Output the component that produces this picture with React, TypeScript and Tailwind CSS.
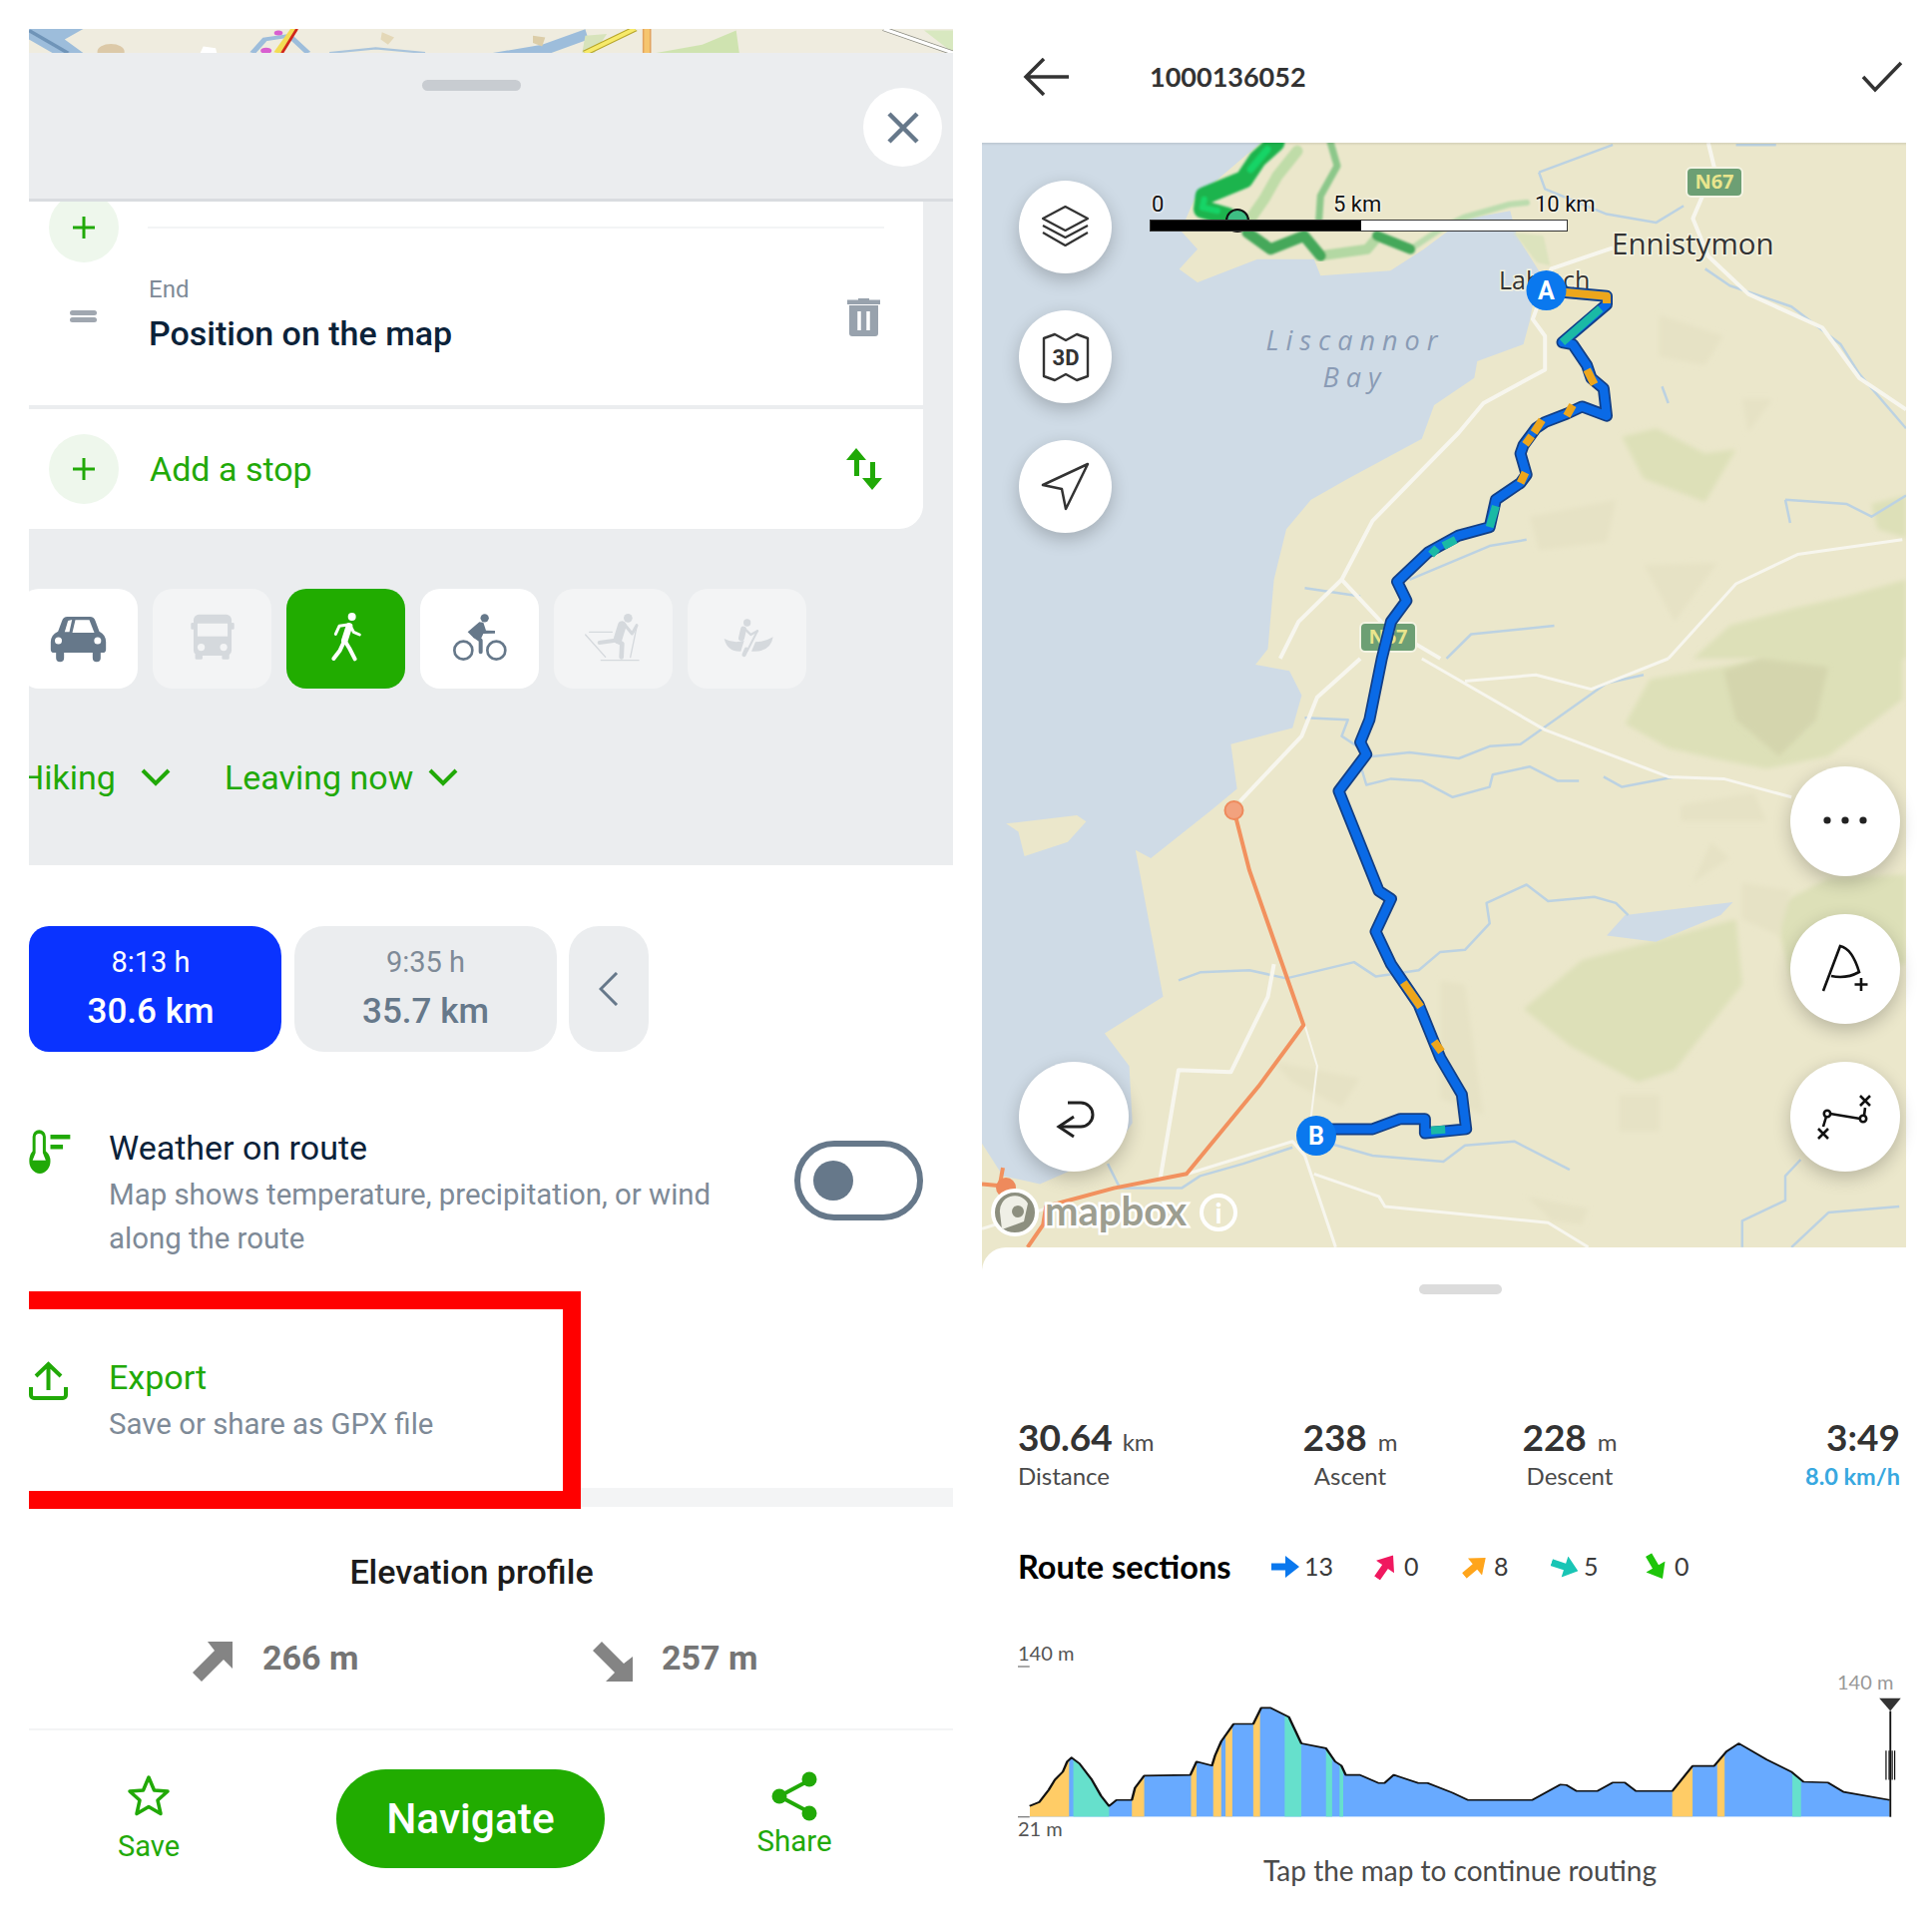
import React from "react";

const conv = (s: string, ox: number, kx: number, oy: number, ky: number) =>
  s
    .trim()
    .split(/\s+/)
    .map((p) => {
      const [x, y] = p.split(",").map(Number);
      return `${(ox + x / kx).toFixed(1)},${(oy + y / ky).toFixed(1)}`;
    })
    .join(" ");
const z4 = (s: string) => conv(s, 968, 1.62, 0, 2.376);
const z5 = (s: string) => conv(s, 968, 1.62, 660, 2.45);
const z3 = (s: string) => conv(s, 1150, 3, 143, 3);

const GREEN = "#21a907";

function TopStrip() {
  return (
    <svg className="block w-[926px] h-[24px] bg-[#efecdf]" viewBox="47 81 1500 67" preserveAspectRatio="none">
      <polygon points="47,81 135,81 105,110 135,148 85,148 47,110" fill="#9dbddb" />
      <polyline points="47,85 110,148" stroke="#6f94b8" strokeWidth="8" fill="none" />
      <circle cx="180" cy="145" r="22" fill="#dcc9a8" />
      <polygon points="325,148 330,130 350,135 352,148" fill="#fff" />
      <polyline points="410,148 430,110 470,100 500,148" stroke="#9dbddb" strokeWidth="10" fill="none" />
      <polyline points="478,81 450,148" stroke="#f3dc55" strokeWidth="12" fill="none" />
      <polyline points="482,81 458,148" stroke="#d0261c" strokeWidth="5" fill="none" />
      <circle cx="432" cy="142" r="9" fill="#d85fd0" />
      <circle cx="452" cy="92" r="7" fill="#d85fd0" />
      <polygon points="620,90 640,105 630,125 618,110" fill="#e4d8b8" />
      <polyline points="535,148 610,135 690,148" stroke="#a9c4dc" strokeWidth="6" fill="none" />
      <polygon points="800,148 880,125 950,82 955,110 895,148" fill="#9dbddb" />
      <polygon points="865,100 885,105 880,130 865,120" fill="#dccda8" />
      <polygon points="950,100 985,95 965,148 945,148" fill="#d7e3bb" />
      <polyline points="1030,81 950,148" stroke="#b6a52a" strokeWidth="14" fill="none" />
      <polyline points="1030,81 950,148" stroke="#f7ea6a" strokeWidth="9" fill="none" />
      <polyline points="1050,81 1050,148" stroke="#e2a25e" strokeWidth="14" fill="none" />
      <polyline points="1050,81 1050,148" stroke="#f6c56e" strokeWidth="9" fill="none" />
      <polygon points="1065,148 1140,125 1195,85 1200,148" fill="#cfe3b0" />
      <polygon points="1500,85 1547,85 1547,148" fill="#d8e8c0" />
      <polyline points="1435,81 1547,148" stroke="#8a8a80" strokeWidth="12" fill="none" />
      <polyline points="1435,81 1547,148" stroke="#fff" strokeWidth="8" fill="none" />
    </svg>
  );
}

function PlusCircle() {
  return (
    <div className="w-[70px] h-[70px] rounded-full bg-[#eef7ec] flex items-center justify-center shrink-0">
      <svg width="24" height="24" viewBox="0 0 24 24">
        <path d="M12 1V23M1 12H23" stroke={GREEN} strokeWidth="3" />
      </svg>
    </div>
  );
}

function ModeButton({ bg, children }: { bg: string; children: React.ReactNode }) {
  return (
    <div className={`w-[119px] h-[100px] rounded-[20px] flex items-center justify-center shrink-0 ${bg}`}>{children}</div>
  );
}

function CarIcon() {
  return (
    <svg width="61" height="60" viewBox="58 30 182 180">
      <path
        d="M66 130Q66 108 88 98L100 66Q104 54 116 54H184Q196 54 200 66L212 98Q232 108 232 130V152Q232 162 222 162H216V178A12 12 0 0 1 192 178V162H106V178A12 12 0 0 1 82 178V162H76Q66 162 66 152Z"
        fill="#66788a"
      />
      <polygon points="108,100 118,66 130,63 122,100" fill="#fff" />
      <polygon points="131,102 140,64 182,64 197,102" fill="#fff" />
      <circle cx="89" cy="126" r="10.5" fill="#fff" />
      <circle cx="207" cy="126" r="10.5" fill="#fff" />
    </svg>
  );
}

function BusIcon() {
  return (
    <svg width="48" height="60" viewBox="480 30 145 180">
      <rect x="495" y="47" width="115" height="124" rx="16" fill="#d5d9dd" />
      <rect x="500" y="165" width="22" height="18" rx="4" fill="#d5d9dd" />
      <rect x="581" y="165" width="22" height="18" rx="4" fill="#d5d9dd" />
      <rect x="487" y="72" width="10" height="20" rx="4" fill="#d5d9dd" />
      <rect x="608" y="72" width="10" height="20" rx="4" fill="#d5d9dd" />
      <rect x="507" y="74" width="91" height="39" fill="#f3f4f5" />
      <circle cx="518" cy="146" r="11" fill="#f3f4f5" />
      <circle cx="586" cy="146" r="11" fill="#f3f4f5" />
    </svg>
  );
}

function WalkIcon() {
  return (
    <svg width="40" height="60" viewBox="895 30 120 180" fill="none" stroke="#fff" strokeLinecap="round" strokeLinejoin="round">
      <circle cx="972" cy="54" r="12" fill="#fff" stroke="none" />
      <path d="M964 82L950 125" strokeWidth="20" />
      <path d="M960 78L934 82L923 106M968 82L977 100L995 108" strokeWidth="9" />
      <path d="M950 125L936 155L917 180M950 125L965 150L981 181" strokeWidth="12" />
    </svg>
  );
}

function BikeIcon() {
  return (
    <svg width="60" height="60" viewBox="95 30 180 180">
      <circle cx="199" cy="58" r="12.5" fill="#66788a" />
      <polygon points="148,100 183,70 195,71 203,95 230,96 230,104 195,105 188,120 166,118" fill="#66788a" />
      <path d="M170 113L187 125V160" fill="none" stroke="#66788a" strokeWidth="12" strokeLinejoin="round" strokeLinecap="round" />
      <circle cx="135" cy="155" r="27" fill="none" stroke="#66788a" strokeWidth="8" />
      <circle cx="234" cy="155" r="27" fill="none" stroke="#66788a" strokeWidth="8" />
    </svg>
  );
}

function SkiIcon() {
  return (
    <svg width="60" height="60" viewBox="495 30 180 180" fill="none" stroke="#d5d9dd" strokeLinecap="round" strokeLinejoin="round">
      <circle cx="628" cy="58" r="13" fill="#d5d9dd" stroke="none" />
      <path d="M610 80L597 122" strokeWidth="26" />
      <path d="M618 78L640 105L654 80" strokeWidth="9" />
      <path d="M596 128L610 135L608 175" strokeWidth="14" />
      <path d="M590 125L542 132" strokeWidth="12" />
      <path d="M655 80L635 176M580 100H512M500 108L560 175M547 185H660" strokeWidth="4" />
    </svg>
  );
}

function CanoeIcon() {
  return (
    <svg width="60" height="60" viewBox="898 30 180 180" fill="none" stroke="#d5d9dd" strokeLinecap="round" strokeLinejoin="round">
      <circle cx="987" cy="72" r="11" fill="#d5d9dd" stroke="none" />
      <path d="M976 92L970 118" strokeWidth="18" />
      <path d="M984 94L998 108L1018 97" strokeWidth="7" />
      <path d="M1018 97L988 155" strokeWidth="6" />
      <path d="M985 152L978 168" strokeWidth="13" />
      <path d="M918 120Q945 135 978 126L968 158Q928 160 918 120Z" fill="#d5d9dd" stroke="none" />
      <path d="M1065 115Q1040 130 1012 130L1000 158Q1058 162 1065 115Z" fill="#d5d9dd" stroke="none" />
    </svg>
  );
}

function Chevron() {
  return (
    <svg width="30" height="18" viewBox="0 0 30 18">
      <path d="M2 2L15 15L28 2" stroke={GREEN} strokeWidth="4" fill="none" />
    </svg>
  );
}

function FatArrow({ className }: { className?: string }) {
  return (
    <svg width="40" height="40" viewBox="0 0 40 40" className={className}>
      <polygon points="15,0 40,0 40,27 31,18 9,40 0,31 22,9" fill="#848484" />
    </svg>
  );
}

function Legend({ color, rot, n, w }: { color: string; rot: string; n: string; w: string }) {
  return (
    <div className={`flex items-center gap-[5px] ${w}`}>
      <svg width="28" height="22" viewBox="0 0 28 22" className={rot}>
        <polygon points="0,7.5 14,7.5 14,0 28,11 14,22 14,14.5 0,14.5" fill={color} />
      </svg>
      <span className="text-[25px] text-[#3a3a3a]">{n}</span>
    </div>
  );
}

function MapView() {
  const land = "#ebe7cb";
  const route =
    z4("942,692 1040,705 1040,725 968,815 985,820 1008,870 1015,900 1035,925 1040,990 1000,968 975,985 940,1005 925,1020 905,1060 900,1080 910,1130 900,1150 860,1190 850,1255 800,1275 750,1315 700,1385 715,1430 690,1480 675,1568") +
    " " +
    z5("655,150 640,205 650,235 605,325 670,570 690,590 665,670 690,750 735,850 770,980 805,1070 812,1155 745,1165 745,1130 705,1130 660,1155 565,1155");
  return (
    <svg className="absolute inset-0 w-[926px] h-[1137px]" viewBox="984 143 926 1137">
      <defs>
        <filter id="soft" x="-5%" y="-5%" width="110%" height="110%">
          <feGaussianBlur stdDeviation="2.5" />
        </filter>
        <filter id="soft2" x="-5%" y="-5%" width="110%" height="110%">
          <feGaussianBlur stdDeviation="1.3" />
        </filter>
      </defs>
      <rect x="984" y="143" width="926" height="1137" fill={land} />
      {/* terrain */}
      <g fill="#dde0b8" filter="url(#soft)">
        <polygon points={z5("1070,160 1110,50 1300,0 1520,0 1520,100 1400,240 1300,270 1230,250 1140,220")} />
        <polygon points={z4("1180,1568 1240,1490 1340,1450 1430,1420 1526,1380 1526,1568")} />
        <polygon points={z5("905,860 1000,740 1250,640 1260,800 1150,1010 1090,1040 980,950")} />
        <polygon points={z4("1065,1040 1120,1020 1200,1080 1250,1070 1200,1195 1100,1140")} />
        <polygon points={z5("1310,610 1400,540 1526,530 1526,750 1340,790")} />
        <polygon points={z4("1470,1200 1526,1180 1526,1280 1480,1260")} />
      </g>
      <g fill="#d4d5ad" filter="url(#soft)">
        <polygon points={z5("1230,30 1290,0 1400,20 1380,150 1320,240 1250,150")} />
      </g>
      <g fill="#e6e2c5" filter="url(#soft)">
        <polygon points={z4("1125,750 1230,800 1200,870 1125,850")} />
        <polygon points={z4("915,1230 1055,1190 1040,1290 930,1310")} />
        <polygon points={z4("1100,1345 1220,1340 1150,1480")} />
        <polygon points={z4("1260,950 1310,950 1270,1030")} />
        <polygon points={z5("1160,360 1280,330 1300,400 1160,400")} />
        <polygon points={z5("770,790 810,800 840,1120 770,1080")} />
        <polygon points={z5("1060,1070 1125,1070 1125,1160 1060,1160")} />
        <polygon points={z5("500,990 640,1030 610,1100 530,1040")} />
        <polygon points={z5("1210,450 1240,490 1180,550")} />
        <polygon points={z5("910,1320 1010,1350 1000,1390 950,1380")} />
        <polygon points={z5("1260,550 1340,570 1320,680 1260,640")} />
      </g>
      {/* water */}
      <polygon
        fill="#cfdbe6"
        points={
          "984,143 " +
          z3("340,0 140,170 100,265 150,320 95,380 150,420 330,350 500,350 520,400 730,385 830,320 950,230 1090,205 1110,280") +
          " " +
          z4("930,645 915,765 905,820 830,860 825,900 760,965 740,1045 620,1140 560,1190 520,1260 500,1380 490,1545") +
          " " +
          z5("470,15 525,30 545,90 530,170 430,210 440,320 400,370 300,490 275,470 320,830 225,920 265,1000 270,1140 240,1210 120,1290 60,1270 26,1190") +
          " 984,1146"
        }
      />
      <polygon fill={land} points={z5("65,405 180,385 195,400 165,450 95,485 85,425")} />
      <polygon fill="#cfdbe6" points={z5("1040,680 1070,630 1150,615 1245,598 1225,630 1120,695")} />
      {/* trails top */}
      <g fill="none" strokeLinejoin="round" strokeLinecap="round" filter="url(#soft2)">
        <polyline points={z3("450,25 390,100 350,170 310,228")} stroke="#bfdca8" strokeWidth="11" />
        <polyline points={z3("550,0 570,70 520,160 515,230")} stroke="#8cc78a" strokeWidth="7" />
        <polyline points={z3("520,340 660,320 690,285")} stroke="#b3d8a3" strokeWidth="10" />
        <polyline points={z3("790,320 880,260 950,225 1090,185 1140,180")} stroke="#bcdcae" strokeWidth="6" />
        <polyline points={z3("300,270 370,320 470,280 520,340")} stroke="#45a85a" strokeWidth="11" />
        <polyline points={z3("690,280 790,320")} stroke="#45a85a" strokeWidth="10" />
        <polyline points={z3("385,0 330,50 290,110 170,160 165,200 240,222")} stroke="#1fb44e" strokeWidth="18" />
        <polyline points={z3("360,20 310,80")} stroke="#14d466" strokeWidth="7" />
        <polyline points={z3("170,170 165,195 210,205")} stroke="#14d466" strokeWidth="6" />
      </g>
      <polygon fill="#dce3bd" points={z3("1100,270 1190,280 1210,370 1170,360")} filter="url(#soft2)" />
      {/* rivers */}
      <g fill="none" stroke="#bcd2e2" strokeWidth="2.5" strokeLinejoin="round">
        <polyline points={z5("345,790 380,770 460,765 520,785 630,745 665,780 735,765 770,720 810,715 850,650 845,600 910,555 945,595 1020,585 1055,600 1075,630")} />
        <polyline points={z5("550,145 620,150 610,190 660,240 720,230 800,245 850,215 900,210 1040,60 1100,40")} />
        <polyline points={z5("640,260 650,310 690,295 740,300 790,340 850,315 855,285 915,265 960,300 995,300")} />
        <polyline points={z5("1035,290 1065,315 1150,290")} />
        <polyline points={z5("590,1190 660,1220 775,1235 810,1195 890,1185 980,1255")} />
        <polyline points={z5("230,1240 250,1300 350,1300 380,1270 450,1240 530,1200")} />
        <polyline points={z5("1260,1445 1260,1380 1330,1330 1330,1270 1355,1230")} />
        <polyline points={z5("1340,1445 1400,1360 1515,1345")} />
        <polyline points={z4("930,410 1050,345")} />
        <polyline points={z4("930,410 940,450 1040,510 1120,530 1165,490")} />
        <polyline points={z4("1250,345 1315,345")} />
        <polyline points={z4("1200,640 1240,680 1340,730 1420,820 1450,890 1526,1020")} />
        <polyline points={z4("1130,920 1140,960")} />
        <polyline points={z4("1330,1190 1338,1245")} />
        <polyline points={z4("1330,1190 1430,1200 1470,1230 1526,1180")} />
        <polyline points={z4("720,1380 850,1300 910,1285")} />
        <polyline points={z4("780,1568 820,1510 955,1490")} />
        <polyline points={z4("550,1400 640,1420")} />
      </g>
      {/* roads */}
      <g fill="none" stroke="#f7f6ee" strokeWidth="4" strokeLinejoin="round">
        <polyline points={z4("1050,590 950,640 920,760 940,800 940,880 840,960 800,1030 660,1240 610,1380 680,1490 770,1568")} />
        <polyline points={z4("1205,340 1215,400 1180,520 1205,610 1270,700 1390,780 1450,900 1526,975")} />
        <polyline points={z4("610,1380 540,1480 510,1568")} />
        <polyline points={z5("640,0 570,95 545,190 445,350")} />
        <polyline points={z5("500,750 490,830 430,1015 345,1010 315,1280")} />
        <polyline points={z5("740,0 940,175 1140,290 1230,295 1340,340")} strokeWidth="3" />
        <polyline points={z4("1140,1568 1250,1390 1350,1320 1520,1285")} strokeWidth="3" />
        <polyline points={z5("810,55 925,40 1015,75 1140,0")} strokeWidth="3" />
        <polyline points={z5("565,1265 670,1320 680,1345 945,1385 1010,1445")} strokeWidth="3" />
        <polyline points={z5("360,1265 530,1185 550,1220 600,1445")} strokeWidth="3" />
        <polyline points={z5("550,900 570,1000 555,1190")} strokeWidth="2" />
        <polyline points={z5("26,1400 130,1350")} strokeWidth="3" />
      </g>
      {/* orange route */}
      <g fill="none" stroke="#f2915e" strokeWidth="4" strokeLinejoin="round">
        <polyline points={z5("435,372 460,520 548,900 475,1050 358,1265 240,1300 130,1345 125,1390 100,1445")} />
        <polyline points={z5("26,1290 60,1295")} />
        <polyline points={z5("60,1250 55,1290")} />
      </g>
      <circle cx="1236.5" cy="812" r="9" fill="#f2a27e" stroke="#ee8a5c" strokeWidth="2" />
      <circle cx="1008" cy="1190" r="10" fill="#ee8a5c" />
      {/* badges */}
      <g style={{ fontFamily: '"Open Sans", sans-serif' }}>
        <rect x="1690" y="168" width="56" height="29" rx="5" fill="#6d9f74" stroke="#f4f4e4" strokeWidth="2" />
        <text x="1718" y="189" textAnchor="middle" fontSize="20" fontWeight="700" fill="#e9e58d">N67</text>
        <rect x="1363" y="624" width="56" height="29" rx="5" fill="#6d9f74" stroke="#f4f4e4" strokeWidth="2" />
        <text x="1391" y="645" textAnchor="middle" fontSize="20" fontWeight="700" fill="#e9e58d">N67</text>
      </g>
      {/* labels */}
      <g style={{ fontFamily: '"Open Sans", sans-serif' }}>
        <text x="1615" y="255" fontSize="29.5" fill="#333" stroke="#f4f2df" strokeWidth="3" style={{ paintOrder: "stroke" }}>Ennistymon</text>
        <text x="1502" y="290" fontSize="25" fill="#333" stroke="#f4f2df" strokeWidth="3" style={{ paintOrder: "stroke" }}>Lahinch</text>
        <text x="1358" y="351" textAnchor="middle" fontSize="27" fontStyle="italic" fill="#8a9bb5" letterSpacing="7">Liscannor</text>
        <text x="1358" y="388" textAnchor="middle" fontSize="27" fontStyle="italic" fill="#8a9bb5" letterSpacing="7">Bay</text>
      </g>
      {/* blue route */}
      <g fill="none" strokeLinejoin="round" strokeLinecap="round">
        <polyline points={route} stroke="#123f86" strokeWidth="12" />
        <polyline points={route} stroke="#0a6ae6" strokeWidth="8.5" />
      </g>
      <g fill="none" strokeLinejoin="round" strokeWidth="8">
        <polyline points={z4("942,692 1040,705 1040,722")} stroke="#eda61c" />
        <polyline points={z4("1030,735 968,815")} stroke="#1ab9a5" />
        <polyline points={z4("1008,880 1020,915")} stroke="#eda61c" />
        <polyline points={z4("985,965 975,990")} stroke="#eda61c" />
        <polyline points={z4("935,1000 922,1030")} stroke="#eda61c" />
        <polyline points={z4("918,1038 908,1058")} stroke="#eda61c" />
        <polyline points={z4("908,1125 900,1150")} stroke="#eda61c" />
        <polyline points={z4("860,1205 850,1255")} stroke="#1ab9a5" />
        <polyline points={z4("795,1285 775,1300")} stroke="#1ab9a5" />
        <polyline points={z4("765,1305 755,1320")} stroke="#1ab9a5" />
        <polyline points={z5("710,795 738,855")} stroke="#eda61c" />
        <polyline points={z5("760,940 772,965")} stroke="#eda61c" />
        <polyline points={z5("755,1158 778,1156")} stroke="#1ab9a5" />
      </g>
      {/* pins */}
      <circle cx="1549.5" cy="291" r="20" fill="#0a78ee" />
      <text x="1549.5" y="300" textAnchor="middle" fontSize="25" fontWeight="700" fill="#fff" style={{ fontFamily: "Roboto, sans-serif" }}>A</text>
      <circle cx="1319" cy="1138" r="20" fill="#0a78ee" />
      <text x="1319" y="1147" textAnchor="middle" fontSize="25" fontWeight="700" fill="#fff" style={{ fontFamily: "Roboto, sans-serif" }}>B</text>
      {/* poi behind the scale */}
      <circle cx="1240" cy="221" r="11" fill="#3ebd84" stroke="#111" strokeWidth="2" />
      {/* mapbox */}
      <circle cx="1017" cy="1215" r="22" fill="#8d8f7f" stroke="#fff" strokeWidth="4" />
      <path d="M1004 1232 L1002 1215 A15 15 0 0 1 1030 1206 L1026 1224 Z" fill="#efefe6" />
      <circle cx="1020" cy="1214" r="6" fill="#8d8f7f" />
      <text x="1047" y="1228" fontSize="40" fontWeight="700" fill="#9d9e90" stroke="#fff" strokeWidth="5" style={{ paintOrder: "stroke", fontFamily: "Lato, sans-serif" }}>mapbox</text>
      <circle cx="1221" cy="1215" r="17" fill="none" stroke="#fff" strokeWidth="4" />
      <text x="1221" y="1226" textAnchor="middle" fontSize="28" fontWeight="700" fill="#fff" style={{ fontFamily: "Lato, sans-serif" }}>i</text>
    </svg>
  );
}

function RoundBtn({ size, className, children }: { size: string; className: string; children: React.ReactNode }) {
  return (
    <div className={`absolute rounded-full bg-white shadow-[0_6px_18px_rgba(0,0,0,0.22)] ${size} ${className}`}>{children}</div>
  );
}

function Chart() {
  const top =
    "104,1255 120,1245 135,1215 145,1190 158,1170 165,1145 172,1135 185,1150 205,1190 220,1230 233,1255 245,1240 270,1240 275,1210 290,1180 365,1178 375,1145 400,1155 405,1130 415,1095 435,1052 467,1052 480,1012 495,1012 525,1035 545,1100 585,1112 600,1145 610,1155 617,1178 640,1178 670,1198 680,1198 695,1178 735,1198 750,1198 790,1222 815,1240 920,1240 965,1202 975,1203 992,1218 1025,1218 1050,1197 1070,1197 1088,1218 1147,1218 1180,1156 1215,1156 1235,1120 1255,1100 1300,1140 1340,1170 1360,1195 1400,1197 1425,1220 1500,1240";
  const o = [
    [104, 168],
    [270, 290],
    [366, 375],
    [402, 415],
    [422, 433],
    [467, 478],
    [1147, 1180],
    [1220, 1232],
  ];
  const t = [
    [175, 233],
    [518, 545],
    [585, 595],
    [607, 613],
    [1342, 1356],
  ];
  return (
    <svg className="absolute left-[36px] top-[28px] w-[886px] h-[162px]" viewBox="85 900 1435 400" preserveAspectRatio="none">
      <defs>
        <clipPath id="chartClip">
          <polygon points={`${top} 1500,1282 104,1282`} />
        </clipPath>
      </defs>
      <g clipPath="url(#chartClip)">
        <rect x="104" y="1000" width="1400" height="282" fill="#68aaff" />
        {o.map(([a, b]) => (
          <rect key={a} x={a} y="1000" width={b - a} height="282" fill="#ffcc66" />
        ))}
        {t.map(([a, b]) => (
          <rect key={a} x={a} y="1000" width={b - a} height="282" fill="#66e0cc" />
        ))}
      </g>
      <polyline points={top} fill="none" stroke="#111" strokeWidth="4" strokeLinejoin="round" />
      <path d="M85 910H104M85 1282H104" stroke="#555" strokeWidth="2.5" />
      <polygon points="1483,988 1518,988 1501,1020" fill="#333" />
      <path d="M1501 1020V1282" stroke="#111" strokeWidth="3" />
      <path d="M1494 1118V1190M1499 1118V1190M1504 1118V1190M1508 1118V1190" stroke="#111" strokeWidth="2" />
    </svg>
  );
}

export default function App() {
  const roboto = "font-['Roboto',sans-serif]";
  const lato = "font-['Lato',sans-serif]";
  return (
    <div className="w-[1936px] h-[1936px] bg-white flex gap-[29px] pl-[29px] pt-[29px] overflow-hidden">
      {/* LEFT */}
      <div className={`w-[926px] h-[1907px] flex flex-col overflow-hidden shrink-0 ${roboto}`}>
        <TopStrip />
        <div className="h-[814px] bg-[#ebedef] flex flex-col overflow-hidden shrink-0">
          <div className="h-[149px] border-b-[3px] border-[#d9dce0] relative shrink-0">
            <div className="absolute left-[394px] top-[27px] w-[99px] h-[11px] rounded-full bg-[#c8ccd1]" />
            <div className="absolute left-[836px] top-[35px] w-[79px] h-[79px] rounded-full bg-white flex items-center justify-center">
              <svg width="32" height="32" viewBox="0 0 32 32">
                <path d="M2 2L30 30M30 2L2 30" stroke="#66788a" strokeWidth="4.5" />
              </svg>
            </div>
          </div>
          <div className="w-[896px] h-[328px] bg-white rounded-br-[24px] overflow-hidden shrink-0 flex flex-col">
            <div className="h-[52px] flex items-center pl-[20px] gap-[29px] shrink-0">
              <PlusCircle />
              <div className="w-[738px] h-[2px] bg-[#f3f4f5]" />
            </div>
            <div className="h-[152px] pt-[18px] flex items-start shrink-0">
              <div className="ml-[41px] mt-[39px] w-[27px] flex flex-col gap-[2px] shrink-0">
                <div className="h-[5px] bg-[#a0a7b0] rounded-full" />
                <div className="h-[5px] bg-[#a0a7b0] rounded-full" />
              </div>
              <div className="ml-[52px] flex flex-col gap-[4px]">
                <div className="h-[36px] leading-[36px] text-[24px] text-[#7e8a97]">End</div>
                <div className="h-[44px] leading-[44px] text-[34px] font-medium text-[#0b2239]">Position on the map</div>
              </div>
              <svg width="33" height="39" viewBox="0 0 33 39" className="ml-auto mr-[43px] mt-[26px]">
                <path d="M11 2.5V1H22V2.5H33V7H0V2.5Z" fill="#98a2ad" />
                <path d="M2 8H31V36a3 3 0 0 1-3 3H5a3 3 0 0 1-3-3Z" fill="#98a2ad" />
                <path d="M12 14V33M21 14V33" stroke="#fff" strokeWidth="3.5" />
              </svg>
            </div>
            <div className="h-[4px] bg-[#ebedef] shrink-0" />
            <div className="h-[120px] flex items-center pl-[20px] shrink-0">
              <PlusCircle />
              <span className="ml-[31px] text-[34px] text-[#21a907]">Add a stop</span>
              <svg width="38" height="42" viewBox="0 0 38 42" className="ml-auto mr-[40px]">
                <path d="M11 0L21 12H14V28H9V12H1Z" fill={GREEN} />
                <path d="M27 42L37 30H30V14H25V30H17Z" fill={GREEN} />
              </svg>
            </div>
          </div>
          <div className="mt-[60px] -ml-[10px] flex gap-[15px] shrink-0">
            <ModeButton bg="bg-white">
              <CarIcon />
            </ModeButton>
            <ModeButton bg="bg-[#f3f4f5]">
              <BusIcon />
            </ModeButton>
            <ModeButton bg="bg-[#21ac00]">
              <WalkIcon />
            </ModeButton>
            <ModeButton bg="bg-white">
              <BikeIcon />
            </ModeButton>
            <ModeButton bg="bg-[#f3f4f5]">
              <SkiIcon />
            </ModeButton>
            <ModeButton bg="bg-[#f3f4f5]">
              <CanoeIcon />
            </ModeButton>
          </div>
          <div className="mt-[67px] -ml-[9px] h-[44px] flex items-center text-[34px] text-[#21a907] shrink-0">
            <span>Hiking</span>
            <span className="ml-[25px]">
              <Chevron />
            </span>
            <span className="ml-[54px]">Leaving now</span>
            <span className="ml-[15px]">
              <Chevron />
            </span>
          </div>
        </div>

        <div className="mt-[61px] h-[126px] flex shrink-0">
          <div className="w-[253px] pr-[9px] bg-[#0a33ff] rounded-[30px] rounded-l-[20px] flex flex-col items-center text-white">
            <div className="mt-[14px] h-[44px] leading-[44px] text-[29px]">8:13 h</div>
            <div className="mt-[6px] h-[44px] leading-[44px] text-[35px] font-medium">30.6 km</div>
          </div>
          <div className="ml-[13px] w-[263px] bg-[#ebedef] rounded-[30px] flex flex-col items-center text-[#66788a]">
            <div className="mt-[14px] h-[44px] leading-[44px] text-[29px] text-[#7e8a97]">9:35 h</div>
            <div className="mt-[6px] h-[44px] leading-[44px] text-[35px] font-medium">35.7 km</div>
          </div>
          <div className="ml-[12px] w-[80px] bg-[#ebedef] rounded-[30px] flex items-center justify-center">
            <svg width="20" height="34" viewBox="0 0 20 34">
              <path d="M18 1L2 17L18 33" stroke="#66788a" strokeWidth="3" fill="none" />
            </svg>
          </div>
        </div>

        <div className="mt-[74px] flex pr-[30px] shrink-0">
          <div className="w-[80px] pt-[2px] shrink-0">
            <svg width="43" height="47" viewBox="27 30 130 140">
              <path d="M38 100V56a20 20 0 0 1 40 0V100Q92 112 92 130A32 38 0 0 1 28 130Q28 112 38 100Z" fill={GREEN} />
              <path d="M47 58a11 11 0 0 1 22 0V105L78 128H38L47 105Z" fill="#fff" />
              <path d="M92 57H152M92 87H130" stroke={GREEN} strokeWidth="14" />
            </svg>
          </div>
          <div className="w-[630px] shrink-0">
            <div className="h-[44px] leading-[44px] text-[34px] text-[#0b2239]">Weather on route</div>
            <div className="mt-[3px] leading-[44px] text-[29.4px] text-[#7e8a97]">
              Map shows temperature, precipitation, or wind
              <br />
              along the route
            </div>
          </div>
          <div className="ml-auto mt-[15px] w-[129px] h-[80px] rounded-full border-[6px] border-[#66788a] bg-white flex items-center pl-[13px] shrink-0">
            <div className="w-[40px] h-[40px] rounded-full bg-[#66788a]" />
          </div>
        </div>

        <div className="mt-[31px] flex items-end shrink-0">
          <div className="w-[553px] h-[218px] border-y-[18px] border-r-[18px] border-[#ff0000] pt-[46px] flex shrink-0">
            <div className="w-[80px] pt-[6px] shrink-0">
              <svg width="39" height="39" viewBox="0 0 39 39">
                <path d="M19.5 29V3M7 15L19.5 3L32 15" fill="none" stroke={GREEN} strokeWidth="4" />
                <path d="M2 26V34a3 3 0 0 0 3 3H34a3 3 0 0 0 3-3V26" fill="none" stroke={GREEN} strokeWidth="4" />
              </svg>
            </div>
            <div>
              <div className="h-[44px] leading-[44px] text-[34px] text-[#21a907]">Export</div>
              <div className="mt-[3px] h-[44px] leading-[44px] text-[29.4px] text-[#7e8a97]">Save or share as GPX file</div>
            </div>
          </div>
          <div className="flex-1 h-[19px] mb-[2px] bg-[#f3f4f5]" />
        </div>

        <div className="w-[887px] mt-[41px] h-[44px] leading-[44px] text-center text-[34px] font-medium text-[#1c1c1c] shrink-0">
          Elevation profile
        </div>
        <div className="mt-[40px] h-[48px] flex items-center pl-[164px] shrink-0">
          <FatArrow className="mt-[8px]" />
          <span className="ml-[30px] w-[97px] text-[34px] font-bold text-[#757575] whitespace-nowrap">266 m</span>
          <FatArrow className="ml-[234px] mt-[8px] rotate-90" />
          <span className="ml-[29px] text-[34px] font-bold text-[#757575] whitespace-nowrap">257 m</span>
        </div>
        <div className="mt-[47px] h-[2px] bg-[#f3f4f5] shrink-0" />

        <div className="mt-[39px] flex items-start shrink-0">
          <div className="ml-[70px] w-[100px] flex flex-col items-center pt-[5px]">
            <svg width="44" height="42" viewBox="0 0 44 42">
              <polygon points="22,3 27.5,16 41,17 31,26 34,39.5 22,32.5 10,39.5 13,26 3,17 16.5,16" fill="none" stroke={GREEN} strokeWidth="3.5" strokeLinejoin="round" />
            </svg>
            <div className="mt-[10px] h-[40px] leading-[40px] text-[29px] text-[#21a907]">Save</div>
          </div>
          <div className="ml-[138px] w-[269px] h-[99px] rounded-full bg-[#21ac00] flex items-center justify-center text-[42.5px] font-medium text-white">
            Navigate
          </div>
          <div className="ml-[140px] w-[100px] flex flex-col items-center pt-[2px]">
            <svg width="46" height="50" viewBox="0 0 46 50">
              <path d="M38 9L8 25L38 41" fill="none" stroke={GREEN} strokeWidth="4" />
              <circle cx="38" cy="8" r="7.5" fill={GREEN} />
              <circle cx="8" cy="25" r="7.5" fill={GREEN} />
              <circle cx="38" cy="42" r="7.5" fill={GREEN} />
            </svg>
            <div className="h-[40px] leading-[40px] text-[29.5px] text-[#21a907]">Share</div>
          </div>
        </div>
      </div>

      {/* RIGHT */}
      <div className={`w-[926px] h-[1907px] flex flex-col shrink-0 ${lato}`}>
        <div className="h-[96px] flex items-center shrink-0">
          <svg width="46" height="38" viewBox="0 0 46 38" className="ml-[41px]">
            <path d="M46 19H3M21 1L3 19L21 37" fill="none" stroke="#333" strokeWidth="3.5" />
          </svg>
          <span className="ml-[81px] text-[27px] font-bold text-[#333]">1000136052</span>
          <svg width="42" height="32" viewBox="0 0 42 32" className="ml-auto mr-[3px]">
            <path d="M2 16L14 29L40 2" fill="none" stroke="#333" strokeWidth="3.5" />
          </svg>
        </div>
        <div className="mt-[18px] h-[1137px] relative shrink-0">
          <MapView />
          <div className="absolute inset-x-0 top-0 h-[3px] bg-gradient-to-b from-black/10 to-transparent" />
          <RoundBtn size="w-[93px] h-[93px]" className="left-[37px] top-[38px]">
            <svg className="w-full h-full" viewBox="0 0 93 93" fill="none" stroke="#333" strokeWidth="2.2" strokeLinejoin="round">
              <polygon points="46.5,26 69,38 46.5,50 24,38" />
              <path d="M24 45L46.5 57L69 45M24 52L46.5 65L69 52" />
            </svg>
          </RoundBtn>
          <RoundBtn size="w-[93px] h-[93px]" className="left-[37px] top-[168px]">
            <svg className="w-full h-full" viewBox="0 0 93 93">
              <polygon points="25,28 36,24 47,30 58,24 69,28 69,66 58,70 47,64 36,70 25,66" fill="none" stroke="#333" strokeWidth="2.4" strokeLinejoin="round" />
              <text x="47" y="55" textAnchor="middle" fontSize="22" fontWeight="700" fill="#333" style={{ fontFamily: "Roboto, sans-serif" }}>3D</text>
            </svg>
          </RoundBtn>
          <RoundBtn size="w-[93px] h-[93px]" className="left-[37px] top-[298px]">
            <svg className="w-full h-full" viewBox="0 0 93 93">
              <polygon points="24,45 69,24 47,69 43,49" fill="none" stroke="#333" strokeWidth="2.5" strokeLinejoin="round" />
            </svg>
          </RoundBtn>
          <RoundBtn size="w-[110px] h-[110px]" className="left-[37px] top-[921px]">
            <svg className="w-full h-full" viewBox="0 0 110 110" fill="none" stroke="#222" strokeWidth="3">
              <path d="M49 41H62a12 12 0 0 1 0 24H40" />
              <path d="M55 55L40 65L55 75" />
            </svg>
          </RoundBtn>
          <RoundBtn size="w-[110px] h-[110px]" className="left-[810px] top-[625px]">
            <svg className="w-full h-full" viewBox="0 0 110 110" fill="#222">
              <circle cx="37" cy="54" r="3.6" />
              <circle cx="55" cy="54" r="3.6" />
              <circle cx="73" cy="54" r="3.6" />
            </svg>
          </RoundBtn>
          <RoundBtn size="w-[110px] h-[110px]" className="left-[810px] top-[773px]">
            <svg className="w-full h-full" viewBox="0 0 110 110" fill="none" stroke="#111" strokeWidth="2.6">
              <path d="M33 77L50 32C60 34 66 48 69 58C60 63 50 64 41 62" />
              <path d="M71 64V77M64.5 70.5H77.5" />
            </svg>
          </RoundBtn>
          <RoundBtn size="w-[110px] h-[110px]" className="left-[810px] top-[921px]">
            <svg className="w-full h-full" viewBox="0 0 110 110" fill="none" stroke="#111" strokeWidth="2.6">
              <path d="M28 67L38 77M38 67L28 77M70 34L80 44M80 34L70 44" />
              <circle cx="37" cy="52" r="3.2" />
              <circle cx="73" cy="57" r="3.2" />
              <path d="M40 52L70 57M36 55L33 65M74 54L75 46" />
            </svg>
          </RoundBtn>
          {/* scale */}
          <div className="absolute left-[168px] top-[47px] w-[419px]">
            <div className={`relative h-[30px] leading-[30px] text-[22px] text-[#111] [text-shadow:0_0_3px_#fff,0_0_3px_#fff] ${roboto}`}>
              <span className="absolute left-[2px] top-0">0</span>
              <span className="absolute left-[184px] top-0">5 km</span>
              <span className="absolute left-[386px] top-0 whitespace-nowrap">10 km</span>
            </div>
            <div className="h-[12px] border border-[#333] flex">
              <div className="w-[211px] bg-black" />
              <div className="flex-1 bg-white" />
            </div>
          </div>
        </div>
        <div className="-mt-[30px] flex-1 bg-white rounded-tl-[24px] relative flex flex-col">
          <div className="ml-[438px] mt-[37px] w-[83px] h-[10px] rounded-full bg-[#dcdcdc] shrink-0" />
          <div className="mt-[121px] flex shrink-0">
            <div className="ml-[36px] w-[260px]">
              <div className="h-[44px] leading-[44px] text-[#333]">
                <span className="text-[37px] font-bold">30.64</span>
                <span className="ml-[10px] text-[24px] text-[#4a4a4a]">km</span>
              </div>
              <div className="mt-[-3px] h-[40px] leading-[40px] text-[24px] text-[#4a4a4a]">Distance</div>
            </div>
            <div className="w-[146px] text-center">
              <div className="h-[44px] leading-[44px] text-[#333] whitespace-nowrap">
                <span className="text-[37px] font-bold">238</span>
                <span className="ml-[11px] text-[24px] text-[#4a4a4a]">m</span>
              </div>
              <div className="mt-[-3px] h-[40px] leading-[40px] text-[24px] text-[#4a4a4a]">Ascent</div>
            </div>
            <div className="w-[294px] text-center">
              <div className="h-[44px] leading-[44px] text-[#333] whitespace-nowrap">
                <span className="text-[37px] font-bold">228</span>
                <span className="ml-[11px] text-[24px] text-[#4a4a4a]">m</span>
              </div>
              <div className="mt-[-3px] h-[40px] leading-[40px] text-[24px] text-[#4a4a4a]">Descent</div>
            </div>
            <div className="flex-1 mr-[6px] text-right">
              <div className="h-[44px] leading-[44px] text-[37px] font-bold text-[#333]">3:49</div>
              <div className="mt-[-3px] h-[40px] leading-[40px] text-[23.5px] font-bold text-[#38a8e0]">8.0 km/h</div>
            </div>
          </div>
          <div className="mt-[49px] h-[44px] flex items-center ml-[36px] shrink-0">
            <span className="w-[254px] text-[32.5px] font-bold text-black whitespace-nowrap">Route sections</span>
            <Legend color="#0a78ee" rot="" n="13" w="w-[100px]" />
            <Legend color="#f0185f" rot="-rotate-[55deg]" n="0" w="w-[90px]" />
            <Legend color="#ffa51c" rot="-rotate-[40deg]" n="8" w="w-[90px]" />
            <Legend color="#19c5b5" rot="rotate-[18deg]" n="5" w="w-[91px]" />
            <Legend color="#1ec50a" rot="rotate-[60deg]" n="0" w="w-[90px]" />
          </div>
          <div className="relative mt-[46px] h-[200px] shrink-0">
            <Chart />
            <span className="absolute left-[36px] top-[6px] text-[20px] text-[#555] leading-[24px]">140 m</span>
            <span className="absolute left-[857px] top-[35px] text-[20px] text-[#999] leading-[24px] whitespace-nowrap">140 m</span>
            <span className="absolute left-[36px] top-[182px] text-[20px] text-[#555] leading-[24px]">21 m</span>
          </div>
          <div className="mt-[16px] h-[40px] leading-[40px] ml-[36px] w-[886px] text-center text-[28px] text-[#4a4a4a] shrink-0">
            Tap the map to continue routing
          </div>
        </div>
      </div>
    </div>
  );
}
